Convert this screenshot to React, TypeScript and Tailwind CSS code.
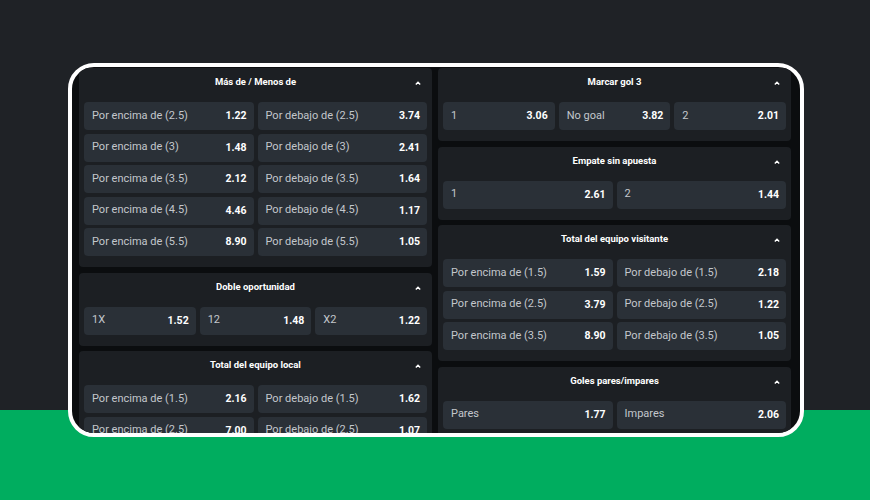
type Odd = { label: string; value: string };

type Market = { title: string; cols: 2 | 3; odds: Odd[] };

const over = (n: string, a: string, b: string): Odd[] => [
  { label: `Por encima de (${n})`, value: a },
  { label: `Por debajo de (${n})`, value: b },
];

const left: Market[] = [
  {
    title: "Más de / Menos de",
    cols: 2,
    odds: [
      ...over("2.5", "1.22", "3.74"),
      ...over("3", "1.48", "2.41"),
      ...over("3.5", "2.12", "1.64"),
      ...over("4.5", "4.46", "1.17"),
      ...over("5.5", "8.90", "1.05"),
    ],
  },
  {
    title: "Doble oportunidad",
    cols: 3,
    odds: [
      { label: "1X", value: "1.52" },
      { label: "12", value: "1.48" },
      { label: "X2", value: "1.22" },
    ],
  },
  {
    title: "Total del equipo local",
    cols: 2,
    odds: [...over("1.5", "2.16", "1.62"), ...over("2.5", "7.00", "1.07")],
  },
];

const right: Market[] = [
  {
    title: "Marcar gol 3",
    cols: 3,
    odds: [
      { label: "1", value: "3.06" },
      { label: "No goal", value: "3.82" },
      { label: "2", value: "2.01" },
    ],
  },
  {
    title: "Empate sin apuesta",
    cols: 2,
    odds: [
      { label: "1", value: "2.61" },
      { label: "2", value: "1.44" },
    ],
  },
  {
    title: "Total del equipo visitante",
    cols: 2,
    odds: [
      ...over("1.5", "1.59", "2.18"),
      ...over("2.5", "3.79", "1.22"),
      ...over("3.5", "8.90", "1.05"),
    ],
  },
  {
    title: "Goles pares/impares",
    cols: 2,
    odds: [
      { label: "Pares", value: "1.77" },
      { label: "Impares", value: "2.06" },
    ],
  },
];

function ChevronUp() {
  return (
    <svg width="6" height="4" viewBox="0 0 6 4" className="block text-white">
      <polyline points="0.8,3.4 3,1.2 5.2,3.4" fill="none" stroke="currentColor" strokeWidth="1.4" />
    </svg>
  );
}

function MarketPanel({ market }: { market: Market }) {
  return (
    <div className="shrink-0 rounded-[4px] bg-[#1c1f23] px-[5px] pb-[11px]">
      <div className="relative flex h-[29px] items-center justify-center">
        <span className="text-[9.5px] font-bold text-white">{market.title}</span>
        <span className="absolute right-[6px] top-[13px]">
          <ChevronUp />
        </span>
      </div>
      <div
        className={
          market.cols === 3
            ? "mt-[5px] grid grid-cols-3 gap-x-[4px] gap-y-[3.5px]"
            : "mt-[5px] grid grid-cols-2 gap-x-[4px] gap-y-[3.5px]"
        }
      >
        {market.odds.map((o, i) => (
          <div
            key={i}
            className="flex h-[28px] items-center justify-between rounded-[4px] bg-[#2a3037] pl-[8px] pr-[7px]"
          >
            <span className="text-[11px] text-[#c3c7cc]">{o.label}</span>
            <span className="text-[10.5px] font-bold text-white">{o.value}</span>
          </div>
        ))}
      </div>
    </div>
  );
}

export default function App() {
  return (
    <div className="h-[500px] w-[870px] overflow-hidden bg-[linear-gradient(to_bottom,#1f2226_0,#1f2226_410px,#00ad5f_410px)] pl-[68px] pt-[63px] font-['Roboto',sans-serif]">
      <div className="h-[374px] w-[736px] overflow-hidden rounded-[26px] border-4 border-white bg-[#0b0d0f] pl-[7px] pt-[1px]">
        <div className="flex gap-[6px]">
          <div className="flex w-[353px] flex-col gap-[5.5px]">
            {left.map((m) => (
              <MarketPanel key={m.title} market={m} />
            ))}
          </div>
          <div className="flex w-[353px] flex-col gap-[5.5px]">
            {right.map((m) => (
              <MarketPanel key={m.title} market={m} />
            ))}
          </div>
        </div>
      </div>
    </div>
  );
}
